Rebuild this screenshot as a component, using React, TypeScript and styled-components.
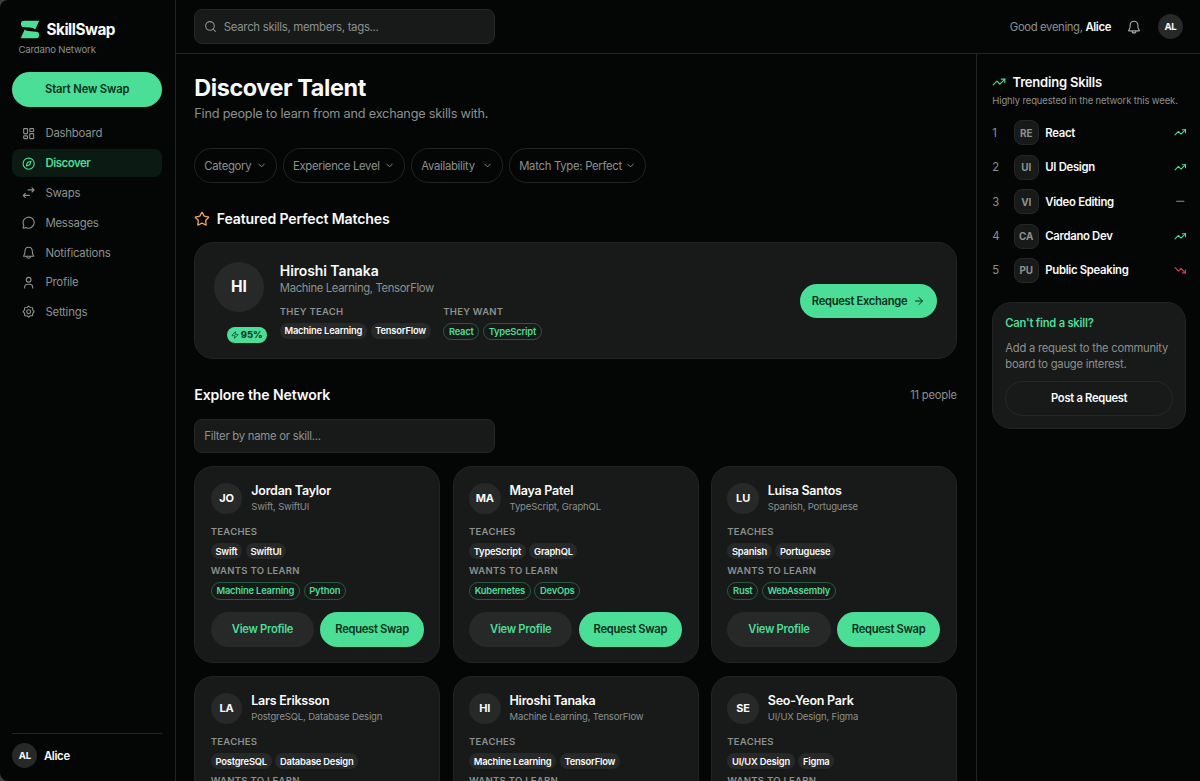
import React from 'react';
import styled, { createGlobalStyle, css } from 'styled-components';
import {
  LayoutDashboard, Compass, MessageCircle, Search, Star, ChevronDown, ArrowRight,
  TrendingUp, TrendingDown, Minus, Zap,
} from 'lucide-react';

const green = '#4ade97';
const muted = '#8b918e';
const line = '#212423';
const card = '#181a19';

const GlobalStyle = createGlobalStyle`
  * { box-sizing: border-box; margin: 0; padding: 0; }
  html { background: #3c3d3e; }
  body { font-family: 'Inter', 'Liberation Sans', sans-serif; color: #fafafa; overflow: hidden; -webkit-font-smoothing: antialiased; }
  button, input { font: inherit; color: inherit; background: none; border: 0; outline: 0; letter-spacing: inherit; }
  svg { display: block; flex: none; }
`;

const Shell = styled.div`
  display: grid;
  grid-template-columns: 176px 1fr;
  width: 1200px;
  height: 781px;
  background: #040605;
  border-radius: 8px 0 0 8px;
  overflow: hidden;
`;

const Sidebar = styled.aside`
  display: flex;
  flex-direction: column;
  padding: 19px 13px 12.7px 12.4px;
  border-right: 1px solid ${line};
`;

const Brand = styled.div`
  display: flex;
  align-items: center;
  gap: 7px;
  height: 20px;
  padding-left: 7.2px;
  font-size: 15.3px;
  font-weight: 700;
  letter-spacing: -0.5px;
`;

const Network = styled.div`
  padding-left: 6px;
  margin-top: 4px;
  height: 14px;
  line-height: 14px;
  font-size: 9.6px;
  letter-spacing: -0.16px;
  color: ${muted};
`;

const pill = css`
  display: flex;
  align-items: center;
  justify-content: center;
  height: 34.5px;
  border-radius: 18px;
  font-size: 11.2px;
  font-weight: 600;
  letter-spacing: -0.3px;
  white-space: nowrap;
`;

const PrimaryButton = styled.button<{ $w?: number }>`
  ${pill}
  gap: 6px;
  background: ${green};
  color: #06301b;
  ${(p) => (p.$w ? `width: ${p.$w}px;` : 'flex: 1;')}
`;

const StartButton = styled(PrimaryButton)`
  letter-spacing: -0.15px;
`;

const GhostButton = styled.button`
  ${pill}
  flex: 1;
  background: #272828;
  color: ${green};
`;

const OutlineButton = styled.button`
  ${pill}
  width: 100%;
  border: 1px solid #252827;
`;

const StartRow = styled.div`
  display: flex;
  margin-top: 15px;
`;

const Nav = styled.nav`
  display: flex;
  flex-direction: column;
  gap: 1.4px;
  margin-top: 12.7px;
`;

const NavItem = styled.a<{ $active?: boolean }>`
  display: flex;
  align-items: center;
  gap: 9.7px;
  height: 28.4px;
  padding-left: 10px;
  border-radius: 8px;
  font-size: 11.4px;
  font-weight: ${(p) => (p.$active ? 600 : 400)};
  letter-spacing: ${(p) => (p.$active ? '-0.45px' : '-0.22px')};
  color: ${(p) => (p.$active ? green : muted)};
  background: ${(p) => (p.$active ? '#0b1a13' : 'transparent')};
`;

const Account = styled.div`
  display: flex;
  align-items: center;
  gap: 6.5px;
  margin-top: auto;
  padding-top: 9.5px;
  border-top: 1px solid ${line};
  font-size: 11.3px;
  font-weight: 600;
  letter-spacing: -0.3px;
`;

const Avatar = styled.span<{ $size: number; $font: number }>`
  display: flex;
  align-items: center;
  justify-content: center;
  flex: none;
  width: ${(p) => p.$size}px;
  height: ${(p) => p.$size}px;
  border-radius: 50%;
  background: #272828;
  color: #fafafa;
  font-size: ${(p) => p.$font}px;
  font-weight: 700;
  letter-spacing: -0.2px;
`;

const Page = styled.div`
  display: grid;
  grid-template-rows: 54px 1fr;
  min-width: 0;
  min-height: 0;
`;

const TopBar = styled.header`
  display: flex;
  align-items: center;
  padding: 0 17px 0 18.3px;
  border-bottom: 1px solid ${line};
`;

const Field = styled.label`
  display: flex;
  align-items: center;
  gap: 6.5px;
  width: 301px;
  height: 34.5px;
  padding: 0 9px;
  border: 1px solid #252827;
  border-radius: 8px;
  background: ${card};
  color: ${muted};
  font-size: 11.4px;
  letter-spacing: -0.3px;
  input { flex: 1; min-width: 0; }
  input::placeholder { color: ${muted}; opacity: 1; }
`;

const Greeting = styled.div`
  margin-left: auto;
  margin-right: 16px;
  font-size: 11.3px;
  letter-spacing: -0.36px;
  color: ${muted};
  b { color: #fafafa; font-weight: 600; }
`;

const HeaderBell = styled.span`
  margin-right: 17px;
  color: #a0a5a2;
`;

const Body = styled.div`
  display: grid;
  grid-template-columns: 800.5px minmax(0, 1fr);
  min-height: 0;
`;

const Main = styled.main`
  padding: 20px 18.7px 0 18.3px;
  border-right: 1px solid ${line};
  overflow: hidden;
`;

const Title = styled.h1`
  height: 28px;
  line-height: 28px;
  font-size: 23.4px;
  font-weight: 700;
  letter-spacing: -0.4px;
`;

const Lead = styled.p`
  height: 18px;
  margin-top: 3px;
  line-height: 18px;
  font-size: 12.7px;
  letter-spacing: -0.2px;
  color: ${muted};
`;

const Filters = styled.div`
  display: flex;
  gap: 6.3px;
  margin-top: 25.4px;
`;

const Filter = styled.button<{ $w: number }>`
  display: flex;
  align-items: center;
  justify-content: space-between;
  width: ${(p) => p.$w}px;
  height: 34.5px;
  padding: 0 9px;
  border: 1px solid ${line};
  border-radius: 18px;
  color: ${muted};
  font-size: 11.3px;
  letter-spacing: -0.28px;
  white-space: nowrap;
`;

const SectionHead = styled.div<{ $top: number }>`
  display: flex;
  align-items: center;
  gap: 6.5px;
  height: 20px;
  margin-top: ${(p) => p.$top}px;
  color: #e9a15c;
`;

const SectionTitle = styled.h2`
  color: #fafafa;
  font-size: 14.1px;
  font-weight: 600;
  letter-spacing: -0.14px;
`;

const Count = styled.span`
  margin-left: auto;
  color: ${muted};
  font-size: 11.2px;
  letter-spacing: -0.2px;
`;

const Featured = styled.section`
  display: flex;
  align-items: center;
  height: 117px;
  margin-top: 13.6px;
  padding: 0 18.5px;
  border: 1px solid ${line};
  border-radius: 19px;
  background: ${card};
`;

const FeaturedFace = styled.div`
  display: flex;
  flex-direction: column;
  width: 53px;
  gap: 15px;
  padding-top: 3px;
`;

const MatchBadge = styled.span`
  display: flex;
  align-items: center;
  justify-content: center;
  align-self: flex-end;
  gap: 2px;
  width: 40px;
  height: 16px;
  border-radius: 8px;
  background: ${green};
  color: #06301b;
  font-size: 9.6px;
  font-weight: 700;
`;

const FeaturedInfo = styled.div`
  flex: 1;
  margin-left: 13px;
`;

const FeaturedName = styled.h3`
  height: 18px;
  line-height: 18px;
  font-size: 14px;
  font-weight: 600;
  letter-spacing: -0.1px;
`;

const FeaturedSkills = styled.p`
  height: 17px;
  line-height: 17px;
  color: ${muted};
  font-size: 11.3px;
  letter-spacing: -0.36px;
`;

const FeaturedGroups = styled.div`
  display: flex;
  gap: 12.6px;
  margin-top: 8.5px;
`;

const GroupLabel = styled.div`
  height: 14px;
  line-height: 14px;
  color: ${muted};
  font-size: 9.5px;
  font-weight: 600;
  letter-spacing: 0.27px;
`;

const Tags = styled.div<{ $top: number }>`
  display: flex;
  align-items: flex-start;
  gap: 3.7px;
  margin-top: ${(p) => p.$top}px;
`;

const Tag = styled.span<{ $outline?: boolean }>`
  display: flex;
  align-items: center;
  height: ${(p) => (p.$outline ? 17.5 : 16)}px;
  padding: 0 4.7px;
  border: ${(p) => (p.$outline ? '1px solid #265a40' : '0')};
  border-radius: 9px;
  background: ${(p) => (p.$outline ? 'transparent' : '#272828')};
  color: ${(p) => (p.$outline ? green : '#fafafa')};
  font-size: 9.4px;
  font-weight: 600;
  letter-spacing: -0.22px;
  white-space: nowrap;
`;

const FieldRow = styled.div`
  margin: 14px 0 12.5px;
`;

const Grid = styled.div`
  display: grid;
  grid-template-columns: repeat(3, 246px);
  justify-content: space-between;
  row-gap: 12.5px;
`;

const Person = styled.article`
  height: 197.5px;
  padding: 15px 15.5px 0;
  border: 1px solid ${line};
  border-radius: 19px;
  background: ${card};
`;

const PersonHead = styled.div`
  display: flex;
  align-items: center;
  gap: 9px;
  height: 33px;
  margin-bottom: 10.2px;
`;

const PersonName = styled.h3`
  height: 17px;
  line-height: 17px;
  font-size: 12.5px;
  font-weight: 600;
  letter-spacing: -0.25px;
`;

const PersonSkills = styled.p`
  height: 15px;
  line-height: 15px;
  color: ${muted};
  font-size: 9.5px;
  letter-spacing: -0.15px;
`;

const Actions = styled.div`
  display: flex;
  gap: 6.3px;
  margin-top: 12.5px;
`;

const Rail = styled.aside`
  padding: 18px 14px 0 15.8px;
`;

const RailHead = styled.div`
  display: flex;
  align-items: center;
  gap: 6.2px;
  height: 20px;
  color: ${green};
`;

const RailTitle = styled.h2`
  color: #fafafa;
  font-size: 13px;
  font-weight: 600;
  letter-spacing: -0.2px;
`;

const RailNote = styled.p`
  height: 14px;
  margin-top: 2px;
  line-height: 14px;
  color: ${muted};
  font-size: 9.5px;
  letter-spacing: -0.14px;
  white-space: nowrap;
`;

const Trends = styled.ol`
  display: flex;
  flex-direction: column;
  gap: 9.4px;
  margin-top: 12px;
  list-style: none;
`;

const Trend = styled.li<{ $tone: string }>`
  display: flex;
  align-items: center;
  height: 25.1px;
  color: ${(p) => p.$tone};
`;

const Rank = styled.span`
  width: 21.5px;
  color: ${muted};
  font-size: 11.3px;
`;

const SkillChip = styled.span`
  display: flex;
  align-items: center;
  justify-content: center;
  width: 25px;
  height: 25px;
  border: 1px solid #252827;
  border-radius: 8px;
  background: ${card};
  color: ${muted};
  font-size: 9.9px;
  font-weight: 700;
`;

const SkillName = styled.span`
  flex: 1;
  margin-left: 6.5px;
  color: #fafafa;
  font-size: 11.3px;
  font-weight: 600;
  letter-spacing: -0.3px;
`;

const RequestCard = styled.section`
  height: 127px;
  margin-top: 19px;
  padding: 12.2px 12px 0;
  border: 1px solid ${line};
  border-radius: 19px;
  background: ${card};
`;

const RequestTitle = styled.h3`
  height: 16px;
  line-height: 16px;
  color: ${green};
  font-size: 11.2px;
  font-weight: 600;
  letter-spacing: -0.22px;
`;

const RequestText = styled.p`
  margin: 10px 0 8.5px;
  color: ${muted};
  font-size: 11.2px;
  line-height: 15.7px;
  letter-spacing: -0.22px;
  white-space: nowrap;
`;

const Logo = () => (
  <svg width="20" height="19" viewBox="0 0 20 19" fill={green}>
    <path d="M4 0.8H19.3L15.2 9.6C14.4 8.6 13.4 8 11.6 7.7L4 7A3.1 3.1 0 0 1 4 0.8Z" />
    <path d="M16 18.2H0.7L4.8 9.2C5.6 10.2 6.6 10.8 8.4 11.1L16 11.8A3.2 3.2 0 0 1 16 18.2Z" />
  </svg>
);

type IconProps = { size?: number; children: React.ReactNode };

const LineIcon = ({ size = 13.3, children }: IconProps) => (
  <svg width={size} height={size} viewBox="0 0 24 24" fill="none" stroke="currentColor" strokeWidth="2" strokeLinecap="round" strokeLinejoin="round">
    {children}
  </svg>
);

const SwapIcon = () => (
  <LineIcon><path d="M11 7H21.5M18 3.2L21.8 7 18 10.8M13 17H2.5M6 13.2L2.2 17 6 20.8" /></LineIcon>
);

const BellIcon = ({ size }: { size?: number }) => (
  <LineIcon size={size}>
    <path d="M12 2.2C8 2.2 5.6 5.2 5.4 9L5 13.5 2.8 18.5H21.2L19 13.5 18.6 9C18.4 5.2 16 2.2 12 2.2ZM8.6 18.8a3.4 3.4 0 0 0 6.8 0" />
  </LineIcon>
);

const PersonIcon = () => (
  <LineIcon>
    <circle cx="12" cy="6.8" r="4.3" />
    <path d="M4.8 21.5v-1a5.5 5.5 0 0 1 5.5-5.5h3.4a5.5 5.5 0 0 1 5.5 5.5v1" />
  </LineIcon>
);

const GearIcon = () => (
  <LineIcon>
    <path d="M12 2l3 2.6 4.1.3.3 4.1L22 12l-2.6 3-.3 4.1-4.1.3L12 22l-3-2.6-4.1-.3-.3-4.1L2 12l2.6-3 .3-4.1L9 4.6z" />
    <circle cx="12" cy="12" r="3.5" />
  </LineIcon>
);

const navItems = [
  { label: 'Dashboard', icon: <LayoutDashboard size={13.3} /> },
  { label: 'Discover', icon: <Compass size={13.3} />, active: true },
  { label: 'Swaps', icon: <SwapIcon /> },
  { label: 'Messages', icon: <MessageCircle size={13.3} /> },
  { label: 'Notifications', icon: <BellIcon /> },
  { label: 'Profile', icon: <PersonIcon /> },
  { label: 'Settings', icon: <GearIcon /> },
];

const filters: [string, number][] = [
  ['Category', 82.3], ['Experience Level', 122], ['Availability', 91.7], ['Match Type: Perfect', 137],
];

const people = [
  { name: 'Jordan Taylor', teaches: ['Swift', 'SwiftUI'], wants: ['Machine Learning', 'Python'] },
  { name: 'Maya Patel', teaches: ['TypeScript', 'GraphQL'], wants: ['Kubernetes', 'DevOps'] },
  { name: 'Luisa Santos', teaches: ['Spanish', 'Portuguese'], wants: ['Rust', 'WebAssembly'] },
  { name: 'Lars Eriksson', teaches: ['PostgreSQL', 'Database Design'], wants: ['Rust'] },
  { name: 'Hiroshi Tanaka', teaches: ['Machine Learning', 'TensorFlow'], wants: ['React', 'TypeScript'] },
  { name: 'Seo-Yeon Park', teaches: ['UI/UX Design', 'Figma'], wants: ['React'] },
];

const trends: [string, 'up' | 'flat' | 'down'][] = [
  ['React', 'up'], ['UI Design', 'up'], ['Video Editing', 'flat'], ['Cardano Dev', 'up'], ['Public Speaking', 'down'],
];

const trendLook = {
  up: { tone: green, icon: <TrendingUp size={12.5} /> },
  flat: { tone: muted, icon: <Minus size={12.5} /> },
  down: { tone: '#d6404f', icon: <TrendingDown size={12.5} /> },
};

const initials = (s: string) => s.slice(0, 2).toUpperCase();

export default function App() {
  return (
    <>
      <GlobalStyle />
      <Shell>
        <Sidebar>
          <Brand><Logo />SkillSwap</Brand>
          <Network>Cardano Network</Network>
          <StartRow><StartButton>Start New Swap</StartButton></StartRow>
          <Nav>
            {navItems.map((n) => <NavItem key={n.label} $active={n.active}>{n.icon}{n.label}</NavItem>)}
          </Nav>
          <Account><Avatar $size={25} $font={9.6}>AL</Avatar>Alice</Account>
        </Sidebar>
        <Page>
          <TopBar>
            <Field><Search size={13} /><input placeholder="Search skills, members, tags..." /></Field>
            <Greeting>Good evening, <b>Alice</b></Greeting>
            <HeaderBell><BellIcon size={14} /></HeaderBell>
            <Avatar $size={25} $font={9.6}>AL</Avatar>
          </TopBar>
          <Body>
            <Main>
              <Title>Discover Talent</Title>
              <Lead>Find people to learn from and exchange skills with.</Lead>
              <Filters>
                {filters.map(([label, w]) => <Filter key={label} $w={w}>{label}<ChevronDown size={11} /></Filter>)}
              </Filters>
              <SectionHead $top={25.8}><Star size={16} /><SectionTitle>Featured Perfect Matches</SectionTitle></SectionHead>
              <Featured>
                <FeaturedFace>
                  <Avatar $size={50} $font={15.5}>HI</Avatar>
                  <MatchBadge><Zap size={8} />95%</MatchBadge>
                </FeaturedFace>
                <FeaturedInfo>
                  <FeaturedName>Hiroshi Tanaka</FeaturedName>
                  <FeaturedSkills>Machine Learning, TensorFlow</FeaturedSkills>
                  <FeaturedGroups>
                    <div>
                      <GroupLabel>THEY TEACH</GroupLabel>
                      <Tags $top={3.5}><Tag>Machine Learning</Tag><Tag>TensorFlow</Tag></Tags>
                    </div>
                    <div>
                      <GroupLabel>THEY WANT</GroupLabel>
                      <Tags $top={3.5}><Tag $outline>React</Tag><Tag $outline>TypeScript</Tag></Tags>
                    </div>
                  </FeaturedGroups>
                </FeaturedInfo>
                <PrimaryButton $w={137.5}>Request Exchange<ArrowRight size={12} /></PrimaryButton>
              </Featured>
              <SectionHead $top={25.6}><SectionTitle>Explore the Network</SectionTitle><Count>11 people</Count></SectionHead>
              <FieldRow><Field><input placeholder="Filter by name or skill..." /></Field></FieldRow>
              <Grid>
                {people.map((p) => (
                  <Person key={p.name}>
                    <PersonHead>
                      <Avatar $size={31.5} $font={11}>{initials(p.name)}</Avatar>
                      <div>
                        <PersonName>{p.name}</PersonName>
                        <PersonSkills>{p.teaches.join(', ')}</PersonSkills>
                      </div>
                    </PersonHead>
                    <GroupLabel>TEACHES</GroupLabel>
                    <Tags $top={4}>{p.teaches.map((t) => <Tag key={t}>{t}</Tag>)}</Tags>
                    <Tags $top={5}><GroupLabel>WANTS TO LEARN</GroupLabel></Tags>
                    <Tags $top={4}>{p.wants.map((t) => <Tag $outline key={t}>{t}</Tag>)}</Tags>
                    <Actions>
                      <GhostButton>View Profile</GhostButton>
                      <PrimaryButton>Request Swap</PrimaryButton>
                    </Actions>
                  </Person>
                ))}
              </Grid>
            </Main>
            <Rail>
              <RailHead><TrendingUp size={14} /><RailTitle>Trending Skills</RailTitle></RailHead>
              <RailNote>Highly requested in the network this week.</RailNote>
              <Trends>
                {trends.map(([name, dir], i) => (
                  <Trend key={name} $tone={trendLook[dir].tone}>
                    <Rank>{i + 1}</Rank>
                    <SkillChip>{initials(name)}</SkillChip>
                    <SkillName>{name}</SkillName>
                    {trendLook[dir].icon}
                  </Trend>
                ))}
              </Trends>
              <RequestCard>
                <RequestTitle>Can't find a skill?</RequestTitle>
                <RequestText>Add a request to the community<br />board to gauge interest.</RequestText>
                <OutlineButton>Post a Request</OutlineButton>
              </RequestCard>
            </Rail>
          </Body>
        </Page>
      </Shell>
    </>
  );
}
